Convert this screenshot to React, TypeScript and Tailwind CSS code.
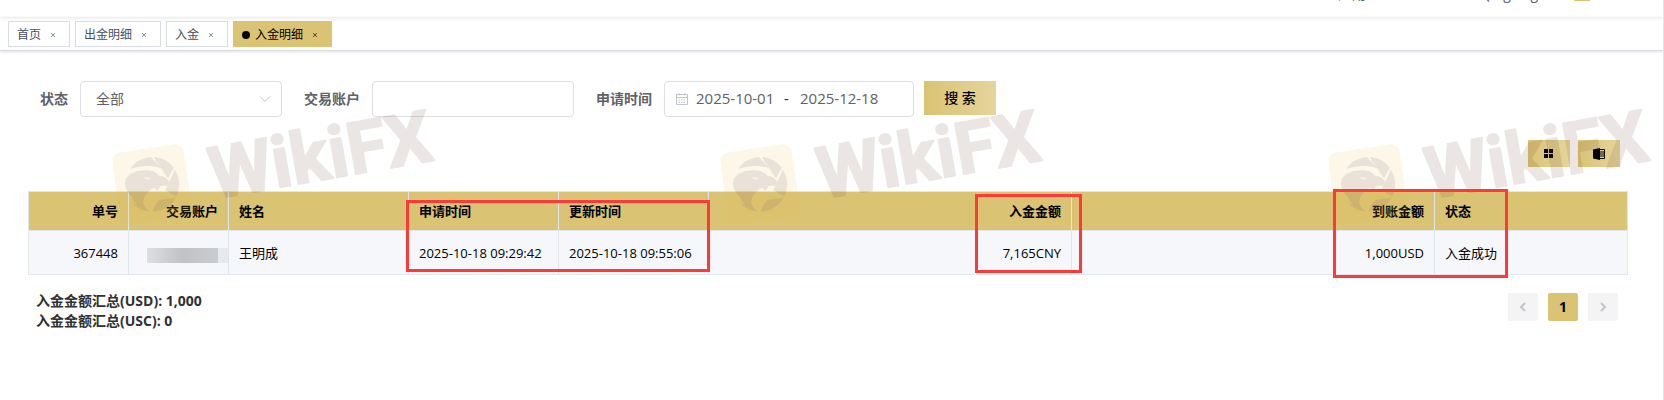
import React from "react";

const tabs = [
  { label: "首页", active: false },
  { label: "出金明细", active: false },
  { label: "入金", active: false },
  { label: "入金明细", active: true },
];

const Header = () => (
  <header className="h-[17px] overflow-hidden bg-white shadow-[0_1px_4px_rgba(0,21,41,0.1)]">
    <div className="-mt-4 flex justify-end gap-[60px] pr-[73px] text-sm leading-5 text-[#5a5e66]">
      <span className="mr-[54px]">应用</span>
      <span>Qingxing</span>
      <span className="-ml-6 h-[17px] w-4 bg-[#dac373]" />
    </div>
  </header>
);

const TabsBar = () => (
  <nav className="flex h-[34px] items-start gap-[5px] border-b border-[#d8dce5] px-2 pt-1 text-xs shadow-[0_1px_3px_rgba(0,0,0,0.12)]">
    {tabs.map((tab) => (
      <a
        key={tab.label}
        href="#"
        className={
          tab.active
            ? "flex h-[26px] items-center border border-[#dac373] bg-[#dac373] px-2 pt-[2px] text-black"
            : "flex h-[26px] items-center border border-[#d8dce5] bg-white px-2 pt-[2px] text-[#495060]"
        }
      >
        {tab.active && <span className="mr-[5px] h-2 w-2 rounded-full bg-black" />}
        {tab.label}
        <svg viewBox="0 0 16 16" className="ml-1 h-4 w-4 opacity-60" stroke="currentColor" fill="none">
          <path d="M6 6l4 4M10 6l-4 4" />
        </svg>
      </a>
    ))}
  </nav>
);

const CalendarIcon = () => (
  <svg viewBox="0 0 14 14" className="h-[14px] w-[14px] shrink-0" stroke="#c0c4cc" fill="none">
    <path d="M1.500 2.500h11v10h-11zM1.500 5.500h11M4 1v2.500M10 1v2.500" />
    <path d="M3.500 8h7M3.500 10.500h7" strokeDasharray="1.500 1" />
  </svg>
);

const SearchForm = () => (
  <form className="flex items-start pl-3 text-sm text-[#606266]">
    <label htmlFor="status" className="mr-3 font-bold leading-9">
      状态
    </label>
    <div className="relative mr-[22px] w-[202px]">
      <select
        id="status"
        className="h-9 w-full appearance-none rounded border border-[#dcdfe6] bg-white px-[15px]"
      >
        <option>全部</option>
      </select>
      <svg
        viewBox="0 0 12 12"
        className="pointer-events-none absolute right-[11px] top-3 h-3 w-3"
        stroke="#c0c4cc"
        fill="none"
      >
        <path d="M1 3.500l5 5 5-5" />
      </svg>
    </div>

    <label htmlFor="account" className="mr-3 font-bold leading-9">
      交易账户
    </label>
    <input
      id="account"
      type="text"
      className="mr-[22px] h-9 w-[202px] rounded border border-[#dcdfe6] bg-white px-[15px]"
    />

    <label htmlFor="date-from" className="mr-3 font-bold leading-9">
      申请时间
    </label>
    <div className="mr-[10px] flex h-9 w-[250px] items-center rounded border border-[#dcdfe6] bg-white pl-[10px] text-[15px]">
      <CalendarIcon />
      <input id="date-from" type="text" defaultValue="2025-10-01" className="ml-[7px] w-[88px]" />
      <span className="w-4 text-[#303133]">-</span>
      <input type="text" aria-label="结束时间" defaultValue="2025-12-18" className="w-[88px]" />
    </div>

    <button
      type="button"
      className="h-[34px] w-[72px] bg-linear-to-r from-[#dac373] to-[#e5d59b] font-medium text-black"
    >
      搜 索
    </button>
  </form>
);

const Toolbar = () => (
  <div className="mt-[23px] flex justify-end gap-2 pr-2">
    <button
      type="button"
      aria-label="列设置"
      className="flex h-[27px] w-[42px] items-center justify-center bg-linear-to-r from-[#dac373] to-[#e5d59b]"
    >
      <svg viewBox="0 0 12 12" className="h-3 w-3">
        <path d="M1 1h4v4H1zM6 1h4v4H6zM1 6h4v4H1zM6 6h4v4H6z" />
      </svg>
    </button>
    <button
      type="button"
      aria-label="导出"
      className="flex h-[27px] w-[42px] items-center justify-center bg-linear-to-r from-[#dac373] to-[#e5d59b]"
    >
      <svg viewBox="0 0 12 12" className="h-3 w-3">
        <path d="M0 1.500L7 0v12L0 10.500z" />
        <path d="M7 1.500h4.500v9H7M7 4h4M7 6h4M7 8h4" fill="none" stroke="#000" />
      </svg>
    </button>
  </div>
);

const th = "relative h-[39px] border border-[#dfe6ec] px-[10px] font-bold";
const td = "h-11 border border-[#dfe6ec] px-[10px]";
const mark = "pointer-events-none absolute z-10 border-[3px] border-[#fd3a38]";

const DepositTable = () => (
  <table className="mt-6 w-full table-fixed border-collapse text-left text-[13px] leading-5 text-black">
    <colgroup>
      <col className="w-[100px]" />
      <col className="w-[100px]" />
      <col className="w-[180px]" />
      <col className="w-[150px]" />
      <col className="w-[150px]" />
      <col />
      <col />
      <col className="w-[193px]" />
    </colgroup>
    <thead className="bg-[#dac373]">
      <tr>
        <th className={`${th} text-right`}>单号</th>
        <th className={`${th} text-right`}>交易账户</th>
        <th className={th}>姓名</th>
        <th className={th}>
          申请时间
          <span className={`${mark} -left-[3px] top-2 h-[72px] w-[304px]`} />
        </th>
        <th className={th}>更新时间</th>
        <th className={`${th} text-right`}>
          入金金额
          <span className={`${mark} -right-[11px] top-[2px] h-[79px] w-[107px]`} />
        </th>
        <th className={`${th} text-right`}>
          到账金额
          <span className={`${mark} -right-[74px] -top-[3px] h-[89px] w-[175px]`} />
        </th>
        <th className={th}>状态</th>
      </tr>
    </thead>
    <tbody className="bg-[#f5f7fa]">
      <tr>
        <td className={`${td} text-right`}>367448</td>
        <td className="h-11 border border-[#dfe6ec]">
          <div className="mt-[6px] flex h-[15px] justify-end">
            <span className="w-[71px] bg-linear-to-r from-[#dedfe1] via-[#c0c2c4] to-[#cacdd0]" />
            <span className="w-[10px] bg-[#e6e9ed]" />
          </div>
        </td>
        <td className={td}>王明成</td>
        <td className={td}>2025-10-18 09:29:42</td>
        <td className={td}>2025-10-18 09:55:06</td>
        <td className={`${td} text-right`}>7,165CNY</td>
        <td className={`${td} text-right`}>1,000USD</td>
        <td className={td}>入金成功</td>
      </tr>
    </tbody>
  </table>
);

const TableFooter = () => (
  <div className="flex items-start justify-between pl-2 pr-[10px] pt-4">
    <div className="text-sm font-bold leading-5 text-[#303133]">
      <p>入金金额汇总(USD): 1,000</p>
      <p>入金金额汇总(USC): 0</p>
    </div>
    <div className="flex gap-[10px] pt-[2px]">
      <button
        type="button"
        aria-label="上一页"
        className="flex h-7 w-[30px] items-center justify-center rounded-xs bg-[#f4f4f5]"
      >
        <svg viewBox="0 0 12 12" className="h-3 w-3" fill="none" stroke="#c0c4cc" strokeWidth="2">
          <path d="M8 2L4 6l4 4" />
        </svg>
      </button>
      <button type="button" className="h-7 w-[30px] rounded-xs bg-[#dac373] text-sm font-bold text-black">
        1
      </button>
      <button
        type="button"
        aria-label="下一页"
        className="flex h-7 w-[30px] items-center justify-center rounded-xs bg-[#f4f4f5]"
      >
        <svg viewBox="0 0 12 12" className="h-3 w-3" fill="none" stroke="#c0c4cc" strokeWidth="2">
          <path d="M4 2l4 4-4 4" />
        </svg>
      </button>
    </div>
  </div>
);

const Watermark = () => (
  <svg viewBox="0 0 340 130" className="h-[130px] w-[340px] shrink-0 overflow-visible">
    <rect
      x="11"
      y="48"
      width="72"
      height="72"
      rx="9"
      fill="#f0c040"
      opacity="0.12"
      transform="rotate(-8.500 47 84)"
    />
    <g fill="#6a4a70" opacity="0.12" transform="translate(0 35) scale(0.333)">
      {/* shutter blades */}
      <path d="M76 102C90 80 112 68 138 67L172 101C140 88 108 92 76 102z" />
      <path d="M146 66C170 67 192 79 207 98L189 130z" />
      <path d="M210 104C226 130 226 160 214 184L181 166z" />
      <path d="M212 189C195 216 170 229 143 230C148 218 152 206 166 194z" />
      {/* eagle head */}
      <path
        fillRule="evenodd"
        d="M62 132C76 110 104 102 138 107C150 109 158 117 163 123C182 122 194 134 195 158C186 150 174 150 163 155C166 160 162 165 156 166C150 158 140 158 136 166C120 178 110 196 118 212C122 220 128 226 135 230C112 228 92 218 78 200C84 206 90 209 96 210C88 202 83 194 82 186C76 182 70 176 67 170C60 158 59 144 62 132zM116 125C122 134 132 136 140 130C132 130 124 129 116 125z"
      />
    </g>
    <text
      x="109"
      y="99"
      fontFamily="Roboto, sans-serif"
      fontSize="72"
      fontWeight="700"
      fill="#6d3e30"
      stroke="#6d3e30"
      strokeWidth="2"
      strokeLinejoin="round"
      opacity="0.13"
      transform="rotate(-10 109 99)"
    >
      WikiFX
    </text>
  </svg>
);

const App = () => {
  return (
    <div className="relative min-h-screen overflow-hidden border-r border-[#e4e4e4] bg-white font-['Open_Sans','Noto_Sans_CJK_SC',sans-serif]">
      <Header />
      <TabsBar />
      <main className="pl-7 pr-[35px] pt-[30px]">
        <SearchForm />
        <Toolbar />
        <DepositTable />
        <TableFooter />
      </main>

      {/* Watermark layer */}
      <div className="pointer-events-none absolute left-[105px] top-[100px] flex gap-[268px]" aria-hidden="true">
        <Watermark />
        <Watermark />
        <Watermark />
      </div>
    </div>
  );
};

export default App;
